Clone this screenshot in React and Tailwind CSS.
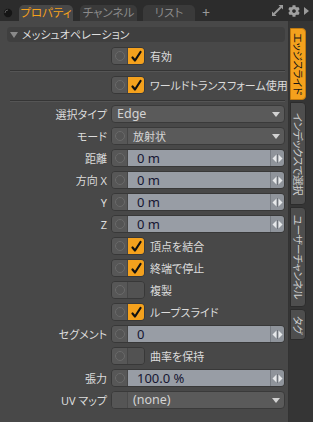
import React from "react";
import { FaCog } from "react-icons/fa";

const FONT = "font-['Noto_Sans','Noto_Sans_CJK_JP',sans-serif] [font-feature-settings:'palt']";

function Knob({ circle = true }) {
  return (
    <div className="w-[16px] h-full shrink-0 bg-[#575757] flex items-center justify-center border-r border-[#464646]">
      {circle && <div className="w-[10px] h-[10px] rounded-full border border-[#6a6a6a] bg-[#545454]" />}
    </div>
  );
}

function Check() {
  return (
    <svg width="12" height="12" viewBox="0 0 12 12">
      <path d="M2.5 7.5 L5 10.5 L10.5 2" fill="none" stroke="#111" strokeWidth="2.2" strokeLinecap="round" strokeLinejoin="round" />
    </svg>
  );
}

function CheckRow({ label, checked }) {
  return (
    <div className="flex items-center h-[18px]">
      <div className="w-[111px] shrink-0" />
      <div className="w-[34px] h-full shrink-0 flex rounded-[4px] overflow-hidden border border-[#383838]">
        <Knob />
        <div className={checked ? "flex-1 bg-[#f4a11d] flex items-center justify-center" : "flex-1 bg-[#525252]"}>
          {checked && <Check />}
        </div>
      </div>
      <span className="ml-[5px] text-[11px] text-[#dcdcdc] leading-none whitespace-nowrap">{label}</span>
    </div>
  );
}

function Label({ children }) {
  return <div className="w-[107px] shrink-0 text-right text-[11px] text-[#dcdcdc] leading-none whitespace-nowrap">{children}</div>;
}

function Arrows() {
  return (
    <svg width="11" height="9" viewBox="0 0 11 9">
      <path d="M0.5 4.5 L4.5 0.5 L4.5 8.5 Z" fill="#e6e8ea" />
      <path d="M10.5 4.5 L6.5 0.5 L6.5 8.5 Z" fill="#e6e8ea" />
      <rect x="5" y="0" width="1" height="9" fill="#6e737a" />
    </svg>
  );
}

function SliderRow({ label, value }) {
  return (
    <div className="flex items-center h-[18px]">
      <Label>{label}</Label>
      <div className="ml-[4px] w-[174px] h-full flex rounded-[4px] overflow-hidden border border-[#383838]">
        <Knob />
        <div className="flex-1 bg-[#989da5] pl-[9px] flex items-center text-[13px] text-[#161632] font-['Noto_Sans',sans-serif] leading-none">{value}</div>
        <div className="w-[14px] bg-[#8f949b] border-l border-[#777c83] flex items-center justify-center">
          <Arrows />
        </div>
      </div>
    </div>
  );
}

function Tri() {
  return (
    <svg width="8" height="5" viewBox="0 0 8 5">
      <path d="M0 0 L8 0 L4 5 Z" fill="#d2d2d2" />
    </svg>
  );
}

function DropRow({ label, value, knob, plain, latin }) {
  return (
    <div className="flex items-center h-[18px]">
      <Label>{label}</Label>
      <div className="ml-[4px] w-[174px] h-full flex rounded-[4px] overflow-hidden border border-[#3a3a3a] bg-[#5a5a5a]">
        {knob && <Knob />}
        {plain && <div className="w-[16px] h-full shrink-0 bg-[#555555] border-r border-[#4a4a4a]" />}
        <div className={(latin ? "text-[12.5px] " : "text-[11px] ") + "pl-[5px] flex-1 flex items-center text-[#d4d4d4] leading-none"}>{value}</div>
        <div className="w-[16px] flex items-center justify-center">
          <Tri />
        </div>
      </div>
    </div>
  );
}

function VTab({ children, active, h }) {
  return (
    <div
      className={
        (active ? "bg-[#f4a11d] text-[#151515] border-[#c07a10] " : "bg-[#4e4e4e] text-[#cfcfcf] border-[#2c2c2c] ") +
        "relative w-[16px] rounded-r-[4px] border text-[10.5px] tracking-[-0.4px] leading-none overflow-hidden"
      }
      style={{ height: h }}
    >
      <span className="absolute left-1/2 top-1/2 -translate-x-1/2 -translate-y-1/2 rotate-90 whitespace-nowrap">{children}</span>
    </div>
  );
}

export default function App() {
  return (
    <div className={"w-[313px] h-[422px] bg-[#2c2c2c] flex flex-col overflow-hidden " + FONT}>
      {/* top bar */}
      <div className="h-[21px] flex items-end relative shrink-0">
        <div className="absolute left-[3px] top-[8px]">
          <svg width="10" height="10" viewBox="0 0 10 10">
            <circle cx="5" cy="5" r="4.2" fill="#151515" />
            <path d="M2 5 A3 3 0 0 1 5 2" stroke="#5a5a5a" strokeWidth="1" fill="none" />
          </svg>
        </div>
        <div className="ml-[19px] w-[54px] h-[16px] bg-[#484848] rounded-t-[5px] flex items-center justify-center text-[11.5px] text-[#f4a11d] leading-none">
          プロパティ
        </div>
        <div className="ml-[7px] w-[57px] h-[16px] bg-[#3a3a3a] rounded-t-[5px] flex items-center justify-center text-[11.5px] text-[#8a8a8a] leading-none">
          チャンネル
        </div>
        <div className="ml-[6px] w-[52px] h-[16px] bg-[#3a3a3a] rounded-t-[5px] flex items-center justify-center text-[11.5px] text-[#8a8a8a] leading-none">
          リスト
        </div>
        <div className="ml-[7px] h-[16px] flex items-center text-[14px] text-[#9a9a9a] leading-none">+</div>
        <div className="ml-auto mr-[4px] h-[21px] flex items-center gap-[4px]">
          <svg width="13" height="13" viewBox="0 0 13 13">
            <path d="M7.5 1 L12 1 L12 5.5 Z" fill="#9c9c9c" />
            <path d="M1 7.5 L1 12 L5.5 12 Z" fill="#9c9c9c" />
            <path d="M3 10 L10 3" stroke="#9c9c9c" strokeWidth="2" />
          </svg>
          <FaCog size={12} color="#a0a0a0" />
          <svg width="5" height="8" viewBox="0 0 5 8">
            <path d="M0 0 L5 4 L0 8 Z" fill="#9a9a9a" />
          </svg>
        </div>
      </div>

      {/* body */}
      <div className="flex-1 flex">
        <div className="w-[289px] bg-[#484848] border-r border-[#333333] flex flex-col pt-[6px]">
          <div className="ml-[7px] w-[278px] h-[15px] bg-[#3f3f3f] rounded-[4px] flex items-center">
            <svg className="ml-[3px]" width="8" height="6" viewBox="0 0 8 6">
              <path d="M0 0 L8 0 L4 6 Z" fill="#8a8a8a" />
            </svg>
            <span className="ml-[4px] text-[11px] text-[#dedede] leading-none whitespace-nowrap">メッシュオペレーション</span>
          </div>
          <div className="mt-[5px]">
            <CheckRow label="有効" checked />
          </div>
          <div className="mt-[5px] ml-[10px] w-[275px] h-[2px] border-t border-[#353535] border-b border-b-[#555555]" />
          <div className="mt-[4px]">
            <CheckRow label="ワールドトランスフォーム使用" checked />
          </div>
          <div className="mt-[6px] ml-[10px] w-[275px] h-[2px] border-t border-[#353535] border-b border-b-[#555555]" />
          <div className="mt-[3px] flex flex-col gap-[4px]">
            <DropRow label="選択タイプ" value="Edge" latin />
            <DropRow label="モード" value="放射状" knob />
            <SliderRow label="距離" value="0 m" />
            <SliderRow label="方向 X" value="0 m" />
            <SliderRow label="Y" value="0 m" />
            <SliderRow label="Z" value="0 m" />
            <CheckRow label="頂点を結合" checked />
            <CheckRow label="終端で停止" checked />
            <CheckRow label="複製" />
            <CheckRow label="ループスライド" checked />
            <SliderRow label="セグメント" value="0" />
            <CheckRow label="曲率を保持" />
            <SliderRow label="張力" value="100.0 %" />
            <DropRow label="UV マップ" value="(none)" plain latin />
          </div>
        </div>
        <div className="flex-1 bg-[#353535] flex flex-col pt-[7px] pl-[1px] gap-[2px]">
          <VTab active h={72}>エッジスライド</VTab>
          <VTab h={103}>インデックスで選択</VTab>
          <VTab h={100}>ユーザーチャンネル</VTab>
          <VTab h={31}>タグ</VTab>
        </div>
      </div>
    </div>
  );
}
